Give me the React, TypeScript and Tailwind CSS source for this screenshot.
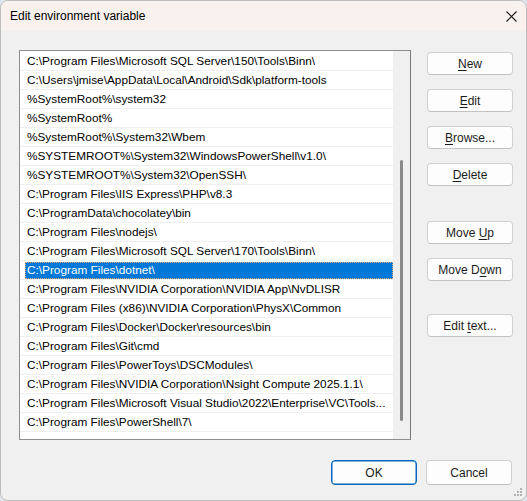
import React from "react";

const rows: string[] = [
  "C:\\Program Files\\Microsoft SQL Server\\150\\Tools\\Binn\\",
  "C:\\Users\\jmise\\AppData\\Local\\Android\\Sdk\\platform-tools",
  "%SystemRoot%\\system32",
  "%SystemRoot%",
  "%SystemRoot%\\System32\\Wbem",
  "%SYSTEMROOT%\\System32\\WindowsPowerShell\\v1.0\\",
  "%SYSTEMROOT%\\System32\\OpenSSH\\",
  "C:\\Program Files\\IIS Express\\PHP\\v8.3",
  "C:\\ProgramData\\chocolatey\\bin",
  "C:\\Program Files\\nodejs\\",
  "C:\\Program Files\\Microsoft SQL Server\\170\\Tools\\Binn\\",
  "C:\\Program Files\\dotnet\\",
  "C:\\Program Files\\NVIDIA Corporation\\NVIDIA App\\NvDLISR",
  "C:\\Program Files (x86)\\NVIDIA Corporation\\PhysX\\Common",
  "C:\\Program Files\\Docker\\Docker\\resources\\bin",
  "C:\\Program Files\\Git\\cmd",
  "C:\\Program Files\\PowerToys\\DSCModules\\",
  "C:\\Program Files\\NVIDIA Corporation\\Nsight Compute 2025.1.1\\",
  "C:\\Program Files\\Microsoft Visual Studio\\2022\\Enterprise\\VC\\Tools...",
  "C:\\Program Files\\PowerShell\\7\\",
  "",
];

const SELECTED = 11;

function Btn({
  pre,
  u,
  post,
  className = "",
  primary = false,
}: {
  pre: string;
  u: string;
  post: string;
  className?: string;
  primary?: boolean;
}) {
  return (
    <div
      className={
        "flex h-[23px] w-[86px] items-center justify-center rounded-[4px] bg-[#fdfdfd] text-[12px] text-[#1b1b1b] " +
        (primary
          ? "border border-[#0067c0] shadow-[inset_0_0_0_0.5px_#0067c0] "
          : "border border-[#d0d0d0] border-b-[#c2c2c2] ") +
        className
      }
    >
      <span>
        {pre}
        {u ? <span className="underline underline-offset-2">{u}</span> : null}
        {post}
      </span>
    </div>
  );
}

export default function App() {
  return (
    <div
      className="h-[501px] w-[527px] bg-[#dfe5ec]"
      style={{ fontFamily: '"Liberation Sans", Arial, sans-serif' }}
    >
      <div className="relative flex h-[501px] w-[527px] flex-col overflow-hidden rounded-[8px] border border-[#bdbdbd] bg-[#f0f0f0]">
        {/* Title bar */}
        <div className="flex h-[30px] shrink-0 items-center justify-between bg-[#f8f1ee] pl-[9px] pr-[9px]">
          <span className="text-[12px] text-[#000]">Edit environment variable</span>
          <svg width="11" height="11" viewBox="0 0 11 11">
            <path d="M0.5 0.5 L10.5 10.5 M10.5 0.5 L0.5 10.5" stroke="#1a1a1a" strokeWidth="1.1" />
          </svg>
        </div>

        {/* Body */}
        <div className="flex flex-1 flex-col">
          <div className="flex">
            {/* List box */}
            <div className="ml-[18px] mt-[19px] flex h-[390px] w-[392px] border border-[#8e8e8e] border-r-[#7a7a7a]">
              <div className="flex-1 overflow-hidden bg-white pt-[1px]">
                {rows.map((r, i) => (
                  <div
                    key={i}
                    className="h-[19px] border-b border-[#efefef] pl-[5px] pt-[1px]"
                  >
                    <div
                      className={
                        "h-[17px] overflow-hidden whitespace-nowrap pl-[2px] text-[11.8px] leading-[17px] " +
                        (i === SELECTED
                          ? "bg-[#0078d7] text-white outline-1 outline-dotted -outline-offset-1 outline-[#e8a86a]"
                          : "text-[#000]")
                      }
                    >
                      {r}
                    </div>
                  </div>
                ))}
              </div>
              <div className="flex w-[17px] shrink-0 justify-center bg-[#f0f0f0]">
                <div className="mt-[109px] h-[261px] w-[3px] rounded-full bg-[#8a8a8a]" />
              </div>
            </div>

            {/* Buttons column */}
            <div className="ml-[16px] mt-[21px] flex flex-col">
              <Btn pre="" u="N" post="ew" />
              <Btn pre="" u="E" post="dit" className="mt-[14px]" />
              <Btn pre="" u="B" post="rowse..." className="mt-[14px]" />
              <Btn pre="" u="D" post="elete" className="mt-[14px]" />
              <Btn pre="Move " u="U" post="p" className="mt-[35px]" />
              <Btn pre="Move D" u="o" post="wn" className="mt-[14px]" />
              <Btn pre="Edit " u="t" post="ext..." className="mt-[33px]" />
            </div>
          </div>

          {/* Footer */}
          <div className="mr-[14px] mt-[20px] flex justify-end gap-[9px]">
            <Btn pre="OK" u="" post="" primary className="h-[25px]" />
            <Btn pre="Cancel" u="" post="" className="h-[25px]" />
          </div>
        </div>

        {/* resize grip */}
        <svg
          width="10"
          height="10"
          viewBox="0 0 10 10"
          className="absolute bottom-[3px] right-[3px]"
        >
          <rect x="7" y="1" width="2" height="2" fill="#b3b3b3" />
          <rect x="4" y="4" width="2" height="2" fill="#b3b3b3" />
          <rect x="7" y="4" width="2" height="2" fill="#b3b3b3" />
          <rect x="1" y="7" width="2" height="2" fill="#b3b3b3" />
          <rect x="4" y="7" width="2" height="2" fill="#b3b3b3" />
          <rect x="7" y="7" width="2" height="2" fill="#b3b3b3" />
        </svg>
      </div>
    </div>
  );
}
